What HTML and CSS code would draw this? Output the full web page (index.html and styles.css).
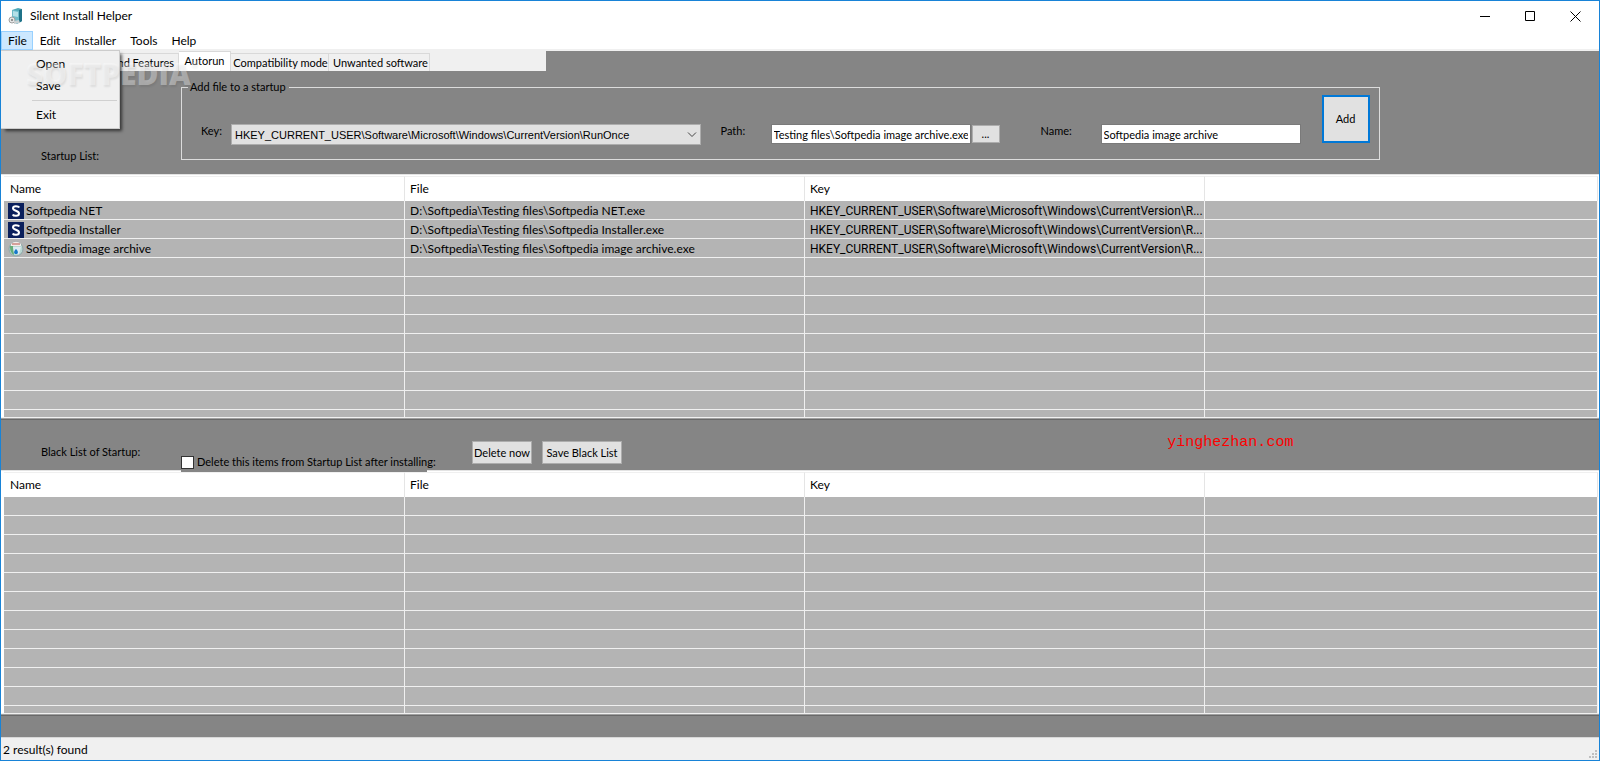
FILE: index.html
```html
<!DOCTYPE html>
<html lang="en">
<head>
<meta charset="utf-8">
<title>Silent Install Helper</title>
<link rel="stylesheet" href="styles.css">
</head>
<body>
<div class="window">
  <header class="titlebar">
    <svg class="app-icon" width="16" height="18" viewBox="0 0 16 18" aria-hidden="true">
      <path d="M4 3l6-2 4 1v12l-5 3-5-3z" fill="#4fa9b8"/>
      <path d="M4 3l7 1v12l-7-2z" fill="#6fbccb"/>
      <path d="M5 4l5 1v5L5 9z" fill="#b4e0e8"/>
      <path d="M11 3l3-1v12l-3 2z" fill="#1f7288"/>
      <circle cx="4" cy="13" r="3" fill="#e4e4e4" stroke="#a0a0a0"/>
      <circle cx="4" cy="13" r="1" fill="#777"/>
      <path d="M6 14l5-1 1 3-6 1z" fill="#c9d0d2"/>
    </svg>
    <h1 class="title">Silent Install Helper</h1>
    <div class="caption-buttons">
      <button class="caption" aria-label="Minimize"><svg width="11" height="11" viewBox="0 0 11 11"><path d="M0 5.500h10" stroke="#000"/></svg></button>
      <button class="caption" aria-label="Maximize"><svg width="11" height="11" viewBox="0 0 11 11"><path d="M.5.5h9v9h-9z" fill="none" stroke="#000"/></svg></button>
      <button class="caption" aria-label="Close"><svg width="11" height="11" viewBox="0 0 11 11"><path d="M.5.5l10 10M10.500.5l-10 10" stroke="#000"/></svg></button>
    </div>
  </header>

  <nav class="menubar">
    <div class="menu-root">
      <button class="menu active" aria-expanded="true">File</button>
      <div class="dropdown">
        <button class="item">Open</button>
        <button class="item">Save</button>
        <hr class="item-line">
        <button class="item">Exit</button>
      </div>
      <span class="watermark" aria-hidden="true">SOFTPEDIA<sup class="mark">®</sup></span>
    </div>
    <button class="menu">Edit</button>
    <button class="menu">Installer</button>
    <button class="menu">Tools</button>
    <button class="menu">Help</button>
  </nav>

  <main class="client">
    <div class="tabs">
      <button class="tab tab-programs">Programs and Features</button>
      <button class="tab tab-autorun selected">Autorun</button>
      <button class="tab tab-compat">Compatibility mode</button>
      <button class="tab tab-unwanted">Unwanted software</button>
    </div>

    <section class="band startup">
      <h2 class="caption-label">Startup List:</h2>
      <fieldset class="group">
        <legend>Add file to a startup</legend>
        <label class="lbl" for="key">Key:</label>
        <div class="combo">
          <select id="key"><option>HKEY_CURRENT_USER\Software\Microsoft\Windows\CurrentVersion\RunOnce</option></select>
          <svg class="chevron" width="10" height="6" viewBox="0 0 10 6" aria-hidden="true"><path d="M1 .5l4 4 4-4" fill="none" stroke="#444"/></svg>
        </div>
        <label class="lbl lbl-path" for="path">Path:</label>
        <input class="box" id="path" type="text" value="Testing files\Softpedia image archive.exe">
        <button class="btn browse">...</button>
        <label class="lbl lbl-name" for="name">Name:</label>
        <input class="box" id="name" type="text" value="Softpedia image archive">
        <button class="btn add">Add</button>
      </fieldset>
    </section>

    <div class="list">
      <div class="rows">
      <table>
        <colgroup><col class="c"><col class="c"><col class="c"><col></colgroup>
        <thead><tr><th>Name</th><th>File</th><th>Key</th><th></th></tr></thead>
        <tbody>
          <tr>
            <td><div class="cell"><svg class="ico" width="16" height="16" viewBox="0 0 16 16"><path d="M0 0h16v16H0z" fill="#0a1f5c"/><path d="M11.300 4.500C10.500 3 5 2.300 5 5.300 5 8.200 11 7.200 11 10.500c0 3.200-5.500 2.700-6.300 1" fill="none" stroke="#fff" stroke-width="2"/></svg>Softpedia NET</div></td>
            <td>D:\Softpedia\Testing files\Softpedia NET.exe</td>
            <td class="key">HKEY_CURRENT_USER\Software\Microsoft\Windows\CurrentVersion\R...</td><td></td>
          </tr>
          <tr>
            <td><div class="cell"><svg class="ico" width="16" height="16" viewBox="0 0 16 16"><path d="M0 0h16v16H0z" fill="#0a1f5c"/><path d="M11.300 4.500C10.500 3 5 2.300 5 5.300 5 8.200 11 7.200 11 10.500c0 3.200-5.500 2.700-6.300 1" fill="none" stroke="#fff" stroke-width="2"/></svg>Softpedia Installer</div></td>
            <td>D:\Softpedia\Testing files\Softpedia Installer.exe</td>
            <td class="key">HKEY_CURRENT_USER\Software\Microsoft\Windows\CurrentVersion\R...</td><td></td>
          </tr>
          <tr>
            <td><div class="cell"><svg class="ico" width="16" height="16" viewBox="0 0 16 16"><circle cx="8" cy="8" r="7" fill="#b9d8d2" stroke="#8fa5a8"/><path d="M2 5c0 5 1 7 4 9 0-4-1-7-1-9z" fill="#63ad78"/><path d="M3 3c3-3 7-3 10 0v2H3z" fill="#f3ece9"/><path d="M4 3h8" stroke="#b5544b"/><path d="M5 6h8l-2 7H6z" fill="#dcebf2"/><path d="M8 8c3 3 2 5 0 5s-3-2 0-5z" fill="#1678c8"/></svg>Softpedia image archive</div></td>
            <td>D:\Softpedia\Testing files\Softpedia image archive.exe</td>
            <td class="key">HKEY_CURRENT_USER\Software\Microsoft\Windows\CurrentVersion\R...</td><td></td>
          </tr>
          <tr><td></td><td></td><td></td><td></td></tr>
          <tr><td></td><td></td><td></td><td></td></tr>
          <tr><td></td><td></td><td></td><td></td></tr>
          <tr><td></td><td></td><td></td><td></td></tr>
          <tr><td></td><td></td><td></td><td></td></tr>
          <tr><td></td><td></td><td></td><td></td></tr>
          <tr><td></td><td></td><td></td><td></td></tr>
          <tr><td></td><td></td><td></td><td></td></tr>
          <tr><td></td><td></td><td></td><td></td></tr>
        </tbody>
      </table>
      </div>
    </div>

    <section class="band black">
      <h2 class="caption-label">Black List of Startup:</h2>
      <label class="check"><input type="checkbox">Delete this items from Startup List after installing:</label>
      <div class="actions">
        <button class="btn delete">Delete now</button>
        <button class="btn save">Save Black List</button>
      </div>
      <span class="site">yinghezhan.com</span>
    </section>

    <div class="list">
      <div class="rows">
      <table>
        <colgroup><col class="c"><col class="c"><col class="c"><col></colgroup>
        <thead><tr><th>Name</th><th>File</th><th>Key</th><th></th></tr></thead>
        <tbody>
          <tr><td></td><td></td><td></td><td></td></tr>
          <tr><td></td><td></td><td></td><td></td></tr>
          <tr><td></td><td></td><td></td><td></td></tr>
          <tr><td></td><td></td><td></td><td></td></tr>
          <tr><td></td><td></td><td></td><td></td></tr>
          <tr><td></td><td></td><td></td><td></td></tr>
          <tr><td></td><td></td><td></td><td></td></tr>
          <tr><td></td><td></td><td></td><td></td></tr>
          <tr><td></td><td></td><td></td><td></td></tr>
          <tr><td></td><td></td><td></td><td></td></tr>
          <tr><td></td><td></td><td></td><td></td></tr>
          <tr><td></td><td></td><td></td><td></td></tr>
        </tbody>
      </table>
      </div>
    </div>
  </main>

  <footer class="status">
    <span>2 result(s) found</span>
    <svg width="8" height="8" viewBox="0 0 8 8" aria-hidden="true"><path d="M6 0h2v2H6zM3 3h2v2H3zM6 3h2v2H6zM0 6h2v2H0zM3 6h2v2H3zM6 6h2v2H6z" fill="#bfbfbf"/></svg>
  </footer>
</div>
</body>
</html>
```
FILE: styles.css
```css
* { box-sizing: border-box; }

body {
  margin: 0;
  color: #000;
  font: 12px/16px Lato, "Noto Sans", sans-serif;
}

button, input, select { font: inherit; color: inherit; margin: 0; }
button { padding: 0; border: 0; background: none; white-space: nowrap; }
h1, h2 { margin: 0; font: inherit; }

.window {
  display: flex;
  flex-direction: column;
  height: 100vh;
  border: 1px solid #1883d7;
  background: #fff;
}

.titlebar { display: flex; align-items: center; height: 30px; padding: 0 1px 0 7px; }
.title { margin-left: 6px; flex: 1; }
.caption-buttons { display: flex; }
.caption { display: grid; place-items: center; width: 45px; height: 28px; }

.menubar { display: flex; height: 18px; }
.menu-root { position: relative; }
.menu { height: 19px; padding: 0 7px; line-height: 20px; }
.menu.active { padding-right: 6px; background: #cce8ff; box-shadow: inset 0 0 0 1px #99d1ff; }

.dropdown {
  position: absolute;
  z-index: 2;
  top: 19px;
  left: 0;
  width: 119px;
  padding: 2px;
  border: 1px solid #ccc;
  border-left: 0;
  background: #f0f0f0;
  box-shadow: 3px 3px 3px -1px rgba(0, 0, 0, .6);
}
.item { display: block; width: 100%; height: 22px; padding-left: 33px; text-align: left; }
.item-line { margin: 3px 0 3px 29px; border: 0; border-top: 1px solid #d0d0d0; }

.watermark {
  position: absolute;
  z-index: 3;
  top: 25px;
  left: 25px;
  display: flex;
  color: rgba(255, 255, 255, .35);
  font: 800 30px/36px "Open Sans", sans-serif;
  text-shadow: 1px 2px 2px rgba(0, 0, 0, .08);
  pointer-events: none;
}
.mark { font-size: 8px; line-height: 16px; }

.client {
  display: flex;
  flex: 1;
  flex-direction: column;
  min-height: 0;
  padding-bottom: 21px;
  border-top: 2px solid #f0f0f0;
  background: #858585;
  font: 11px/16px Lato, "Liberation Sans", sans-serif;
}

.tabs { display: flex; align-items: flex-end; width: 545px; height: 20px; background: #f0f0f0; }
.tab { height: 18px; border: 1px solid #d9d9d9; border-width: 1px 1px 0 0; }
.tab-programs { width: 178px; padding-right: 4px; text-align: right; }
.tab-autorun { width: 52px; }
.tab-compat { width: 98px; padding-left: 2px; }
.tab-unwanted { width: 101px; padding-left: 3px; }
.tab.selected { height: 20px; padding-bottom: 1px; background: #fff; }

.band { display: flex; flex: none; }
.caption-label { flex: none; width: 180px; padding-left: 40px; }
.startup { height: 103px; align-items: flex-end; padding-bottom: 14px; }
.startup .caption-label { margin-bottom: -4px; }

.group {
  display: flex;
  align-items: flex-start;
  width: 75%;
  height: 80px;
  margin: 0;
  padding: 0 9px 0 19px;
  border: 1px solid #dcdcdc;
}
legend { height: 14px; margin-left: -13px; padding: 0 3px 0 2px; line-height: 14px; }
.lbl { flex: none; width: 30px; margin-top: 29px; }
.lbl-path { width: 50px; margin-left: 20px; }
.lbl-name { width: 60px; margin-left: 41px; }
.combo { position: relative; flex: 1; margin-top: 30px; font-family: "Liberation Sans", Arial, sans-serif; }
.combo select {
  appearance: none;
  display: block;
  width: 100%;
  height: 21px;
  padding: 0 20px 0 3px;
  border: 1px solid #adadad;
  border-radius: 0;
  background: #e1e1e1;
}
.chevron { position: absolute; top: 8px; right: 4px; }
.box {
  flex: none;
  width: 200px;
  height: 20px;
  margin-top: 30px;
  padding: 0 2px;
  border: 1px solid #7a7a7a;
  background: #fff;
}
.btn { flex: none; border: 1px solid #adadad; background: #e1e1e1; }
.browse { width: 28px; height: 18px; margin: 31px 0 0 1px; }
.add { width: 48px; height: 48px; margin: 1px 0 0 21px; border: 2px solid #0078d7; }

.list {
  display: flex;
  flex: 1 1 0;
  flex-direction: column;
  min-height: 0;
  border-top: 1px solid #e3e3e3;
  border-bottom: 1px solid #696969;
  background: #a0a0a0;
  font: 12px/16px Lato, "Noto Sans", sans-serif;
}
.rows {
  flex: 1;
  min-height: 0;
  overflow: hidden;
  margin-bottom: 1px;
  padding: 1px 1px 0 3px;
  border-bottom: 1px solid #f0f0f0;
  background: #fff;
}
table { width: 100%; table-layout: fixed; border-collapse: separate; border-spacing: 0; }
.c { width: 401px; }
.c + .c { width: 400px; }
th {
  height: 25px;
  padding: 0 5px;
  border-top: 1px solid #f0f0f0;
  border-right: 1px solid #e5e5e5;
  background: #fff;
  font-weight: 400;
  text-align: left;
}
th:first-child { padding-left: 6px; }
td {
  height: 19px;
  padding: 1px 4px 0 5px;
  overflow: hidden;
  border-right: 1px solid #f0f0f0;
  border-bottom: 1px solid #f0f0f0;
  background: #b4b4b4;
  text-overflow: ellipsis;
  white-space: nowrap;
}
td:first-child { padding-left: 4px; }
.key { padding-right: 0; font-family: Roboto, "Noto Sans", sans-serif; }
.cell { display: flex; align-items: center; gap: 2px; }

.black { height: 50px; align-items: flex-start; }
.black .caption-label { padding-top: 24px; }
.check {
  position: relative;
  z-index: 1;
  display: flex;
  flex: none;
  align-items: center;
  gap: 3px;
  width: 246px;
  height: 20px;
  margin-top: 32px;
  background: #858585;
  white-space: nowrap;
}
.check input { appearance: none; flex: none; width: 13px; height: 13px; border: 1px solid #333; background: #fff; }
.actions { display: flex; gap: 10px; margin: 21px 0 0 45px; }
.delete { width: 60px; height: 23px; }
.save { width: 80px; height: 23px; }
.site {
  margin: 15px 19% 0 auto;
  padding-right: 2px;
  color: #f00;
  font: 15px/16px "Liberation Mono", monospace;
}

.status {
  display: flex;
  justify-content: space-between;
  align-items: center;
  height: 23px;
  padding: 1px 2px 0;
  border-top: 1px solid #d7d7d7;
  background: #f0f0f0;
}
.status svg { align-self: flex-end; margin-bottom: 2px; }
```
